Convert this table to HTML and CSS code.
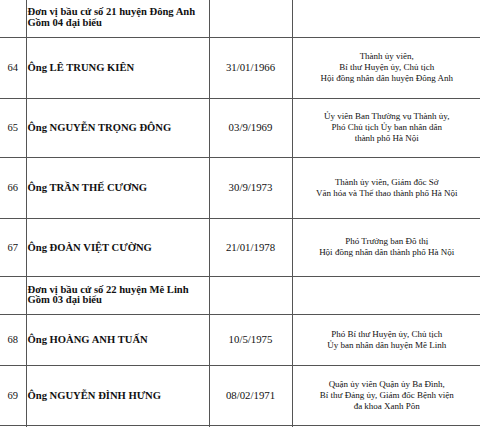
FILE: index.html
```html
<!DOCTYPE html>
<html lang="vi">
<head>
<meta charset="utf-8">
<title>Danh sách đại biểu</title>
<link rel="stylesheet" href="styles.css">
</head>
<body>
<table class="list">
  <colgroup>
    <col class="c-no">
    <col class="c-name">
    <col class="c-date">
    <col class="c-pos">
  </colgroup>
  <tbody>
    <tr class="group h-top">
      <td></td>
      <td class="name">Đơn vị bầu cử số 21 huyện Đông Anh<br>Gồm 04 đại biểu</td>
      <td></td>
      <td></td>
    </tr>
    <tr class="h61">
      <td class="no">64</td>
      <td class="name">Ông LÊ TRUNG KIÊN</td>
      <td class="date">31/01/1966</td>
      <td class="pos">Thành ủy viên,<br>Bí thư Huyện ủy, Chủ tịch<br>Hội đồng nhân dân huyện Đông Anh</td>
    </tr>
    <tr class="h59">
      <td class="no">65</td>
      <td class="name">Ông NGUYỄN TRỌNG ĐÔNG</td>
      <td class="date">03/9/1969</td>
      <td class="pos">Ủy viên Ban Thường vụ Thành ủy,<br>Phó Chủ tịch Ủy ban nhân dân<br>thành phố Hà Nội</td>
    </tr>
    <tr class="h61">
      <td class="no">66</td>
      <td class="name">Ông TRẦN THẾ CƯƠNG</td>
      <td class="date">30/9/1973</td>
      <td class="pos">Thành ủy viên, Giám đốc Sở<br>Văn hóa và Thể thao thành phố Hà Nội</td>
    </tr>
    <tr class="h58">
      <td class="no">67</td>
      <td class="name">Ông ĐOÀN VIỆT CƯỜNG</td>
      <td class="date">21/01/1978</td>
      <td class="pos">Phó Trưởng ban Đô thị<br>Hội đồng nhân dân thành phố Hà Nội</td>
    </tr>
    <tr class="group h38">
      <td></td>
      <td class="name">Đơn vị bầu cử số 22 huyện Mê Linh<br>Gồm 03 đại biểu</td>
      <td></td>
      <td></td>
    </tr>
    <tr class="h51">
      <td class="no">68</td>
      <td class="name">Ông HOÀNG ANH TUẤN</td>
      <td class="date">10/5/1975</td>
      <td class="pos">Phó Bí thư Huyện ủy, Chủ tịch<br>Ủy ban nhân dân huyện Mê Linh</td>
    </tr>
    <tr class="h60">
      <td class="no">69</td>
      <td class="name">Ông NGUYỄN ĐÌNH HƯNG</td>
      <td class="date">08/02/1971</td>
      <td class="pos">Quận ủy viên Quận ủy Ba Đình,<br>Bí thư Đảng ủy, Giám đốc Bệnh viện<br>đa khoa Xanh Pôn</td>
    </tr>
    <tr class="h60">
      <td class="no"></td>
      <td class="name"></td>
      <td class="date"></td>
      <td class="pos"></td>
    </tr>
  </tbody>
</table>
</body>
</html>
```

FILE: styles.css
```css
html, body {
  margin: 0;
  padding: 0;
  background: #ffffff;
  overflow: hidden;
}

body {
  font-family: "Liberation Serif", "Times New Roman", serif;
  font-size: 10px;
  color: #111111;
}

.list {
  border-collapse: collapse;
  table-layout: fixed;
  width: 481px;
  margin-top: -1px;
}

.c-no { width: 26px; }
.c-name { width: 183px; }
.c-date { width: 83px; }
.c-pos { width: 189px; }

.list td {
  border: 1px solid #555555;
  padding: 0;
  vertical-align: middle;
  line-height: 11px;
}

.list td:first-child { border-left: none; }
.list td:last-child { border-right: none; }
.list tr:first-child td { border-top: none; }

.no {
  text-align: center;
  font-size: 10.5px;
}

.list td.name {
  font-weight: bold;
  font-size: 10.6px;
  padding-left: 1px;
  text-align: left;
}

.group .name { line-height: 10.5px; }

.date {
  text-align: center;
  font-size: 10.8px;
}

.pos {
  text-align: center;
  font-size: 9px;
}

.h-top { height: 38px; }
.h38 { height: 38px; }
.h51 { height: 51px; }
.h58 { height: 58px; }
.h59 { height: 59px; }
.h60 { height: 60px; }
.h61 { height: 61px; }
```
